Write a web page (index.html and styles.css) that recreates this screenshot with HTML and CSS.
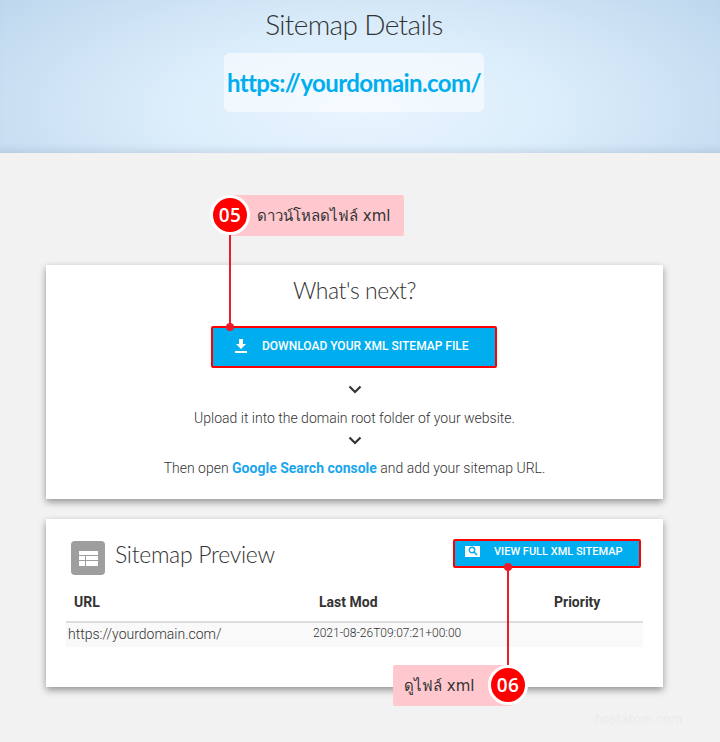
FILE: index.html
```html
<!DOCTYPE html>
<html lang="en">
<head>
<meta charset="utf-8">
<title>Sitemap Details</title>
<link rel="stylesheet" href="styles.css">
</head>
<body>
<header class="hero">
  <h1 class="hero-title">Sitemap Details</h1>
  <a class="hero-url">https://yourdomain.com/</a>
</header>
<main class="main">
  <section class="card next">
    <h2 class="next-title">What's next?</h2>
    <a class="btn btn-download">
      <svg class="btn-icon" width="14" height="14" viewBox="0 0 14 14"><path fill="#fff" d="M5 0h4v5h3L7 10 2 5h3zM1 12h12v2H1z"/></svg>
      <span>DOWNLOAD YOUR XML SITEMAP FILE</span>
    </a>
    <svg class="chev chev-first" width="14" height="9" viewBox="0 0 14 9"><path fill="none" stroke="#333" stroke-width="2.2" d="M1.5 1.5 7 7l5.5-5.5"/></svg>
    <p class="step">Upload it into the domain root folder of your website.</p>
    <svg class="chev" width="14" height="9" viewBox="0 0 14 9"><path fill="none" stroke="#333" stroke-width="2.2" d="M1.5 1.5 7 7l5.5-5.5"/></svg>
    <p class="step step-last">Then open <a class="link">Google Search console</a> and add your sitemap URL.</p>
  </section>
  <section class="card preview">
    <div class="preview-head">
      <div class="preview-titlewrap">
        <span class="preview-icon">
          <svg width="19" height="15" viewBox="0 0 19 15"><path fill="#fff" d="M0 0h19v4H0zM0 5h6v4H0zM7 5h12v4H7zM0 10h6v5H0zM7 10h12v5H7z"/></svg>
        </span>
        <h2 class="preview-title">Sitemap Preview</h2>
      </div>
      <a class="btn btn-view">
        <span class="view-icon"><svg width="10" height="10" viewBox="0 0 10 10"><circle cx="4" cy="4" r="2.7" fill="none" stroke="#00aeef" stroke-width="1.4"/><path stroke="#00aeef" stroke-width="1.6" d="m6 6 3 3"/></svg></span>
        <span>VIEW FULL XML SITEMAP</span>
      </a>
    </div>
    <div class="cols">
      <div class="col-h col-url">URL</div>
      <div class="col-h col-mod">Last Mod</div>
      <div class="col-h col-pri">Priority</div>
    </div>
    <div class="row">
      <div class="cell-url">https://yourdomain.com/</div>
      <div class="cell-mod">2021-08-26T09:07:21+00:00</div>
    </div>
  </section>
  <div class="watermark">hostatom.com</div>
</main>

<div class="note note-05">
  <span class="badge">05</span>
  <span class="note-text">ดาวน์โหลดไฟล์ xml</span>
</div>
<div class="line line-05"></div>
<div class="dot dot-05"></div>

<div class="line line-06"></div>
<div class="dot dot-06"></div>
<div class="note note-06">
  <span class="note-text">ดูไฟล์ xml</span>
  <span class="badge">06</span>
</div>
</body>
</html>
```
FILE: styles.css
```css
* { box-sizing: border-box; }
html, body { margin: 0; padding: 0; }
body {
  position: relative;
  width: 720px;
  height: 742px;
  overflow: hidden;
  background: #f2f2f2;
  font-family: Roboto, "Liberation Sans", sans-serif;
  color: #333;
}
.hero {
  height: 153px;
  padding: 9px 12px 0 0;
  display: flex;
  flex-direction: column;
  align-items: center;
  background: radial-gradient(ellipse 68% 130% at 50% 72%, #e9f5ff 0%, #dbedfb 40%, #c2daef 85%, #b8d2e9 100%);
  box-shadow: inset 0 -9px 9px -7px rgba(60, 90, 120, .16);
}
.hero-title {
  margin: 0;
  font: 300 28px/30px Lato, sans-serif;
  letter-spacing: -.65px;
  color: #333;
}
.hero-url {
  margin-top: 14px;
  width: 260px;
  height: 59px;
  border-radius: 6px;
  background: rgba(255, 255, 255, .55);
  color: #00aeef;
  font: 700 24px/59px Lato, sans-serif;
  letter-spacing: -.6px;
  text-align: center;
}
.main {
  padding: 112px 57px 0 46px;
}
.card {
  background: #fff;
  box-shadow: 0 3px 7px rgba(0, 0, 0, .4);
}
.next {
  height: 234px;
  display: flex;
  flex-direction: column;
  align-items: center;
  padding-top: 11px;
}
.next-title {
  margin: 0;
  font: 300 23px/28px Lato, sans-serif;
  letter-spacing: -.45px;
  color: #333;
}
.btn {
  display: flex;
  align-items: center;
  background: #00aeef;
  border: 2px solid #f00;
  border-radius: 2px;
  color: #fff;
  font-weight: 500;
}
.btn-download {
  margin: 22px 1px 0 0;
  width: 286px;
  height: 42px;
  padding: 0 0 2px 21px;
  font-size: 12px;
}
.btn-icon { margin-right: 14px; }
.chev { display: block; }
.chev-first { margin-top: 17px; }
.step {
  margin: 0;
  font-size: 14px;
  font-weight: 300;
  line-height: 20px;
  color: #333;
}
.chev + .step { margin-top: 14px; }
.step + .chev { margin-top: 8px; }
.chev + .step-last { margin-top: 13px; }
.link { color: #1ba5ee; font-weight: 700; }
.preview {
  margin-top: 20px;
  height: 168px;
  padding: 20px 20px 0;
}
.preview-head {
  display: flex;
  justify-content: space-between;
  align-items: flex-start;
}
.preview-titlewrap {
  display: flex;
  align-items: flex-start;
  margin: 2px 0 0 5px;
}
.preview-icon {
  width: 34px;
  height: 34px;
  border-radius: 4px;
  background: #9e9e9e;
  display: flex;
  align-items: center;
  justify-content: center;
}
.preview-title {
  margin: 0 0 0 10px;
  font: 300 23px/26px Lato, sans-serif;
  letter-spacing: -.3px;
  color: #333;
}
.btn-view {
  width: 188px;
  height: 29px;
  padding: 0 0 5px 10px;
  margin-right: 2px;
  font-size: 11px;
}
.view-icon {
  width: 15px;
  height: 11px;
  background: #fff;
  display: flex;
  align-items: center;
  justify-content: center;
  margin-right: 14px;
}
.cols {
  display: flex;
  margin-top: 17px;
  height: 31px;
  border-bottom: 2px solid #ddd;
}
.col-h {
  font-size: 14px;
  font-weight: 700;
  line-height: 20px;
  color: #333;
}
.col-url { width: 253px; padding-left: 8px; }
.col-mod { width: 235px; }
.row {
  display: flex;
  height: 24px;
  background: #f9f9f9;
}
.cell-url {
  width: 247px;
  padding-left: 2px;
  font-size: 14px;
  font-weight: 300;
  line-height: 22px;
}
.cell-mod {
  font-size: 12px;
  font-weight: 300;
  line-height: 20px;
}
.watermark {
  position: absolute;
  left: 595px;
  top: 712px;
  font: 400 11.8px/14px "DejaVu Sans", sans-serif;
  color: #ebebeb;
  letter-spacing: .2px;
}
.note {
  position: absolute;
  height: 41px;
  background: #ffc8ce;
  border-radius: 2px;
  display: flex;
  align-items: center;
}
.note-05 { left: 230px; top: 195px; width: 174px; }
.note-06 { left: 393px; top: 665px; width: 119px; }
.note-text {
  font-family: "DejaVu Sans", "Noto Sans", sans-serif;
  font-size: 15px;
  font-weight: 400;
  color: #333;
  white-space: nowrap;
}
.note-05 .note-text { margin-left: 27px; }
.note-06 .note-text { margin-left: 11px; }
.badge {
  position: absolute;
  top: 0;
  width: 40px;
  height: 40px;
  border-radius: 50%;
  background: #f00;
  border: 3px solid #fff;
  color: #fff;
  font: 600 19px/34px "Open Sans", sans-serif;
  letter-spacing: .3px;
  text-align: center;
}
.note-05 .badge { left: -20px; }
.note-06 .badge { right: -16px; }
.line {
  position: absolute;
  width: 2px;
  background: #ec1c2c;
}
.line-05 { left: 229px; top: 235px; height: 92px; }
.line-06 { left: 507px; top: 566px; height: 101px; }
.dot {
  position: absolute;
  width: 8px;
  height: 8px;
  border-radius: 50%;
  background: #ec1c2c;
}
.dot-05 { left: 226px; top: 323px; }
.dot-06 { left: 504px; top: 563px; }
```
